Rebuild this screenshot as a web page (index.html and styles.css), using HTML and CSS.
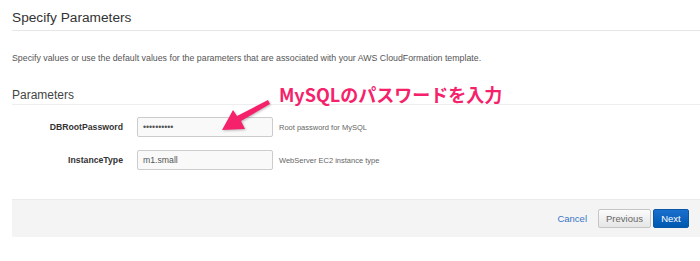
FILE: index.html
```html
<!DOCTYPE html>
<html lang="en">
<head>
    <meta charset="UTF-8">
    <title>Specify Parameters</title>
    <link rel="stylesheet" href="styles.css">
</head>
<body>
    <div class="page">
        <h1 class="page-title">Specify Parameters</h1>
        <p class="intro">Specify values or use the default values for the parameters that are associated with your AWS CloudFormation template.</p>
        <h2 class="section-title">Parameters</h2>
        <div class="params">
            <div class="param-row">
                <label class="param-label">DBRootPassword</label>
                <input class="param-input" type="password" value="password12">
                <span class="param-help">Root password for MySQL</span>
            </div>
            <div class="param-row">
                <label class="param-label">InstanceType</label>
                <input class="param-input" type="text" value="m1.small">
                <span class="param-help">WebServer EC2 instance type</span>
            </div>
        </div>
        <div class="footer">
            <a href="#" class="cancel-link">Cancel</a>
            <button class="btn btn-default">Previous</button>
            <button class="btn btn-primary">Next</button>
        </div>
        <div class="callout">
            <svg class="callout-arrow" width="60" height="40" viewBox="0 0 60 40">
                <polygon points="48,1 50,5 21,22 25,30 2,31 13,11 17,17" fill="#f5216b"/>
            </svg>
            <span class="callout-text">MySQLのパスワードを入力</span>
        </div>
    </div>
</body>
</html>
```

FILE: styles.css
```css
html, body {
    margin: 0;
    padding: 0;
    background: #fff;
}
body {
    font-family: "Liberation Sans", Arial, sans-serif;
    color: #444;
}
.page {
    position: relative;
    padding-left: 12px;
}
.page-title {
    margin: 0;
    padding: 10px 0 4px;
    font-size: 13.7px;
    line-height: 16px;
    font-weight: normal;
    color: #333;
    border-bottom: 1px solid #e6e6e6;
}
.intro {
    margin: 0;
    padding-top: 21px;
    font-size: 8.8px;
    line-height: 12px;
    color: #555;
}
.section-title {
    margin: 0;
    padding: 24px 0 2px;
    font-size: 12px;
    line-height: 14px;
    font-weight: normal;
    color: #444;
    border-bottom: 1px solid #eee;
}
.params {
    padding-top: 12px;
    display: flex;
    flex-direction: column;
    gap: 13px;
}
.param-row {
    display: flex;
    align-items: center;
}
.param-label {
    width: 111px;
    text-align: right;
    font-size: 8.7px;
    font-weight: bold;
    color: #333;
}
.param-input {
    margin: 0 0 0 14px;
    width: 136px;
    height: 20px;
    box-sizing: border-box;
    border: 1px solid #ccc;
    border-radius: 2px;
    background: #f9f9f9;
    padding: 0 5px;
    font-family: inherit;
    font-size: 8.7px;
    color: #555;
}
.param-help {
    margin-left: 6px;
    font-size: 7.5px;
    color: #666;
}
.footer {
    margin-top: 29px;
    height: 38px;
    box-sizing: border-box;
    background: #f4f4f4;
    border-top: 1px solid #ebebeb;
    display: flex;
    justify-content: flex-end;
    align-items: center;
    padding-right: 11px;
}
.cancel-link {
    margin-right: 11px;
    font-size: 9.5px;
    color: #3a75c4;
    text-decoration: none;
}
.btn {
    height: 19px;
    box-sizing: border-box;
    border-radius: 2px;
    font-family: inherit;
    font-size: 9.5px;
    padding: 0;
    cursor: pointer;
}
.btn-default {
    width: 53px;
    border: 1px solid #c6c6c6;
    background: linear-gradient(#fbfbfb, #e6e6e6);
    color: #666;
}
.btn-primary {
    margin-left: 2px;
    width: 36px;
    border: 1px solid #0a56a6;
    background: linear-gradient(#1a6fce, #0058b0);
    color: #fff;
}
.callout {
    position: absolute;
    left: 220px;
    top: 80px;
}
.callout-arrow {
    position: absolute;
    left: 0;
    top: 19px;
    filter: drop-shadow(1px 1px 1px rgba(0, 0, 0, 0.25));
}
.callout-text {
    position: absolute;
    left: 59px;
    top: 3px;
    white-space: nowrap;
    font-family: "Noto Sans CJK JP", sans-serif;
    font-size: 18px;
    line-height: 22px;
    font-weight: bold;
    color: #f5216b;
}
```
